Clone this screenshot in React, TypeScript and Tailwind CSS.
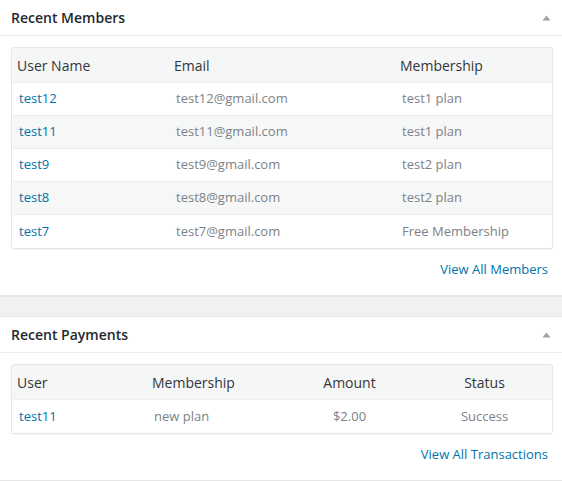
import React from "react";

const font = { fontFamily: '"Open Sans", "Noto Sans", sans-serif' };

function Arrow() {
  return (
    <svg width="9" height="6" viewBox="0 0 9 6" className="block">
      <path d="M4.5 0.5 L8.5 5.5 L0.5 5.5 Z" fill="#9ea3a8" />
    </svg>
  );
}

function Panel({ title, children, first }: { title: string; children: React.ReactNode; first?: boolean }) {
  return (
    <div className={`bg-white border-t border-b border-[#e5e5e5] shadow-[0_1px_1px_rgba(0,0,0,0.04)] ${first ? "" : "mt-5"}`}>
      <div className="h-[35px] border-b border-[#eeeeee] box-content flex items-center justify-between pl-[11px] pr-[11px]">
        <h2 className="text-[14px] font-semibold text-[#23282d] leading-none">{title}</h2>
        <Arrow />
      </div>
      <div className="pt-[11px] pl-[11px] pr-[9px] pb-4">{children}</div>
    </div>
  );
}

const members = [
  ["test12", "test12@gmail.com", "test1 plan"],
  ["test11", "test11@gmail.com", "test1 plan"],
  ["test9", "test9@gmail.com", "test2 plan"],
  ["test8", "test8@gmail.com", "test2 plan"],
  ["test7", "test7@gmail.com", "Free Membership"],
];

export default function App() {
  return (
    <div className="w-[562px] min-h-[481px] bg-[#f1f1f1] overflow-hidden" style={font}>
      <div className="-mt-px">
        <Panel title="Recent Members" first>
          <div className="border border-[#e5e5e5] rounded-[3px] shadow-[0_1px_1px_rgba(0,0,0,0.04)] overflow-hidden">
            <div className="grid grid-cols-[157px_226px_1fr] h-[35px] items-center bg-[#f5f6f6] border-b border-[#eeeeee] text-[14px] text-[#32373c]">
              <div className="pl-[5px]">User Name</div>
              <div className="pl-[5px]">Email</div>
              <div className="pl-[5px]">Membership</div>
            </div>
            {members.map((m, i) => (
              <div
                key={m[0]}
                className={`grid grid-cols-[157px_226px_1fr] h-[33px] items-center text-[13px] ${i < members.length - 1 ? "border-b border-[#eeeeee]" : ""} ${i % 2 === 1 ? "bg-[#f6f7f7]" : "bg-white"}`}
              >
                <div className="pl-[7px] text-[#0073aa]">{m[0]}</div>
                <div className="pl-[7px] text-[#7e8287]">{m[1]}</div>
                <div className="pl-[7px] text-[#7e8287]">{m[2]}</div>
              </div>
            ))}
          </div>
          <div className="mt-[10px] leading-[20px] text-right text-[13px] text-[#0073aa] pr-[5px]">View All Members</div>
        </Panel>
        <Panel title="Recent Payments">
          <div className="border border-[#e5e5e5] rounded-[3px] shadow-[0_1px_1px_rgba(0,0,0,0.04)] overflow-hidden">
            <div className="grid grid-cols-4 h-[35px] items-center bg-[#f5f6f6] border-b border-[#eeeeee] text-[14px] text-[#32373c]">
              <div className="pl-[5px]">User</div>
              <div className="pl-[5px]">Membership</div>
              <div className="text-center">Amount</div>
              <div className="text-center">Status</div>
            </div>
            <div className="grid grid-cols-4 h-[33px] items-center text-[13px] bg-white">
              <div className="pl-[7px] text-[#0073aa]">test11</div>
              <div className="pl-[7px] text-[#7e8287]">new plan</div>
              <div className="text-center text-[#7e8287]">$2.00</div>
              <div className="text-center text-[#7e8287]">Success</div>
            </div>
          </div>
          <div className="mt-[10px] leading-[20px] text-right text-[13px] text-[#0073aa] pr-[5px]">View All Transactions</div>
        </Panel>
      </div>
    </div>
  );
}
